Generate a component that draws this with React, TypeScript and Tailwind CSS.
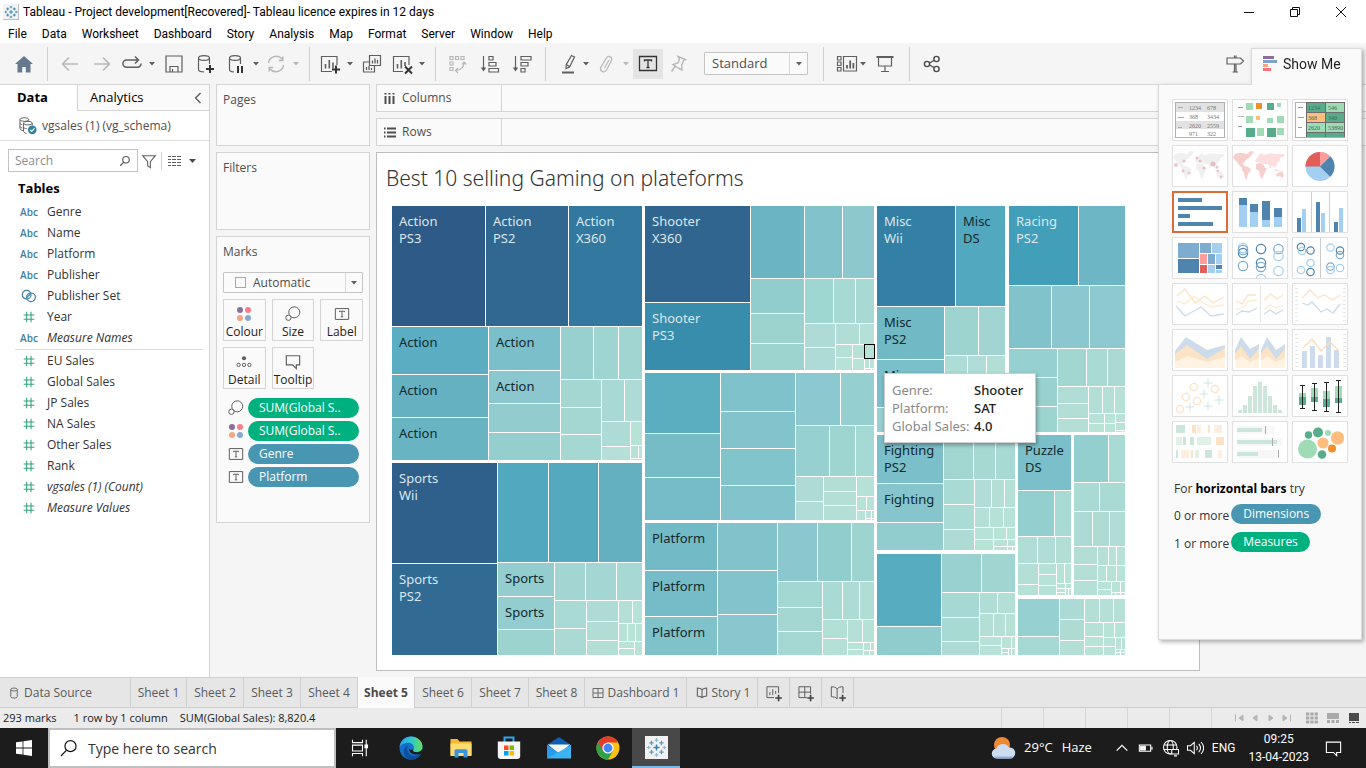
import type { ReactNode } from "react";

type Cell = [number, number, number, number, string];
type Box = [number, number, number, number, string];

/* Treemap cells: left, top, right, bottom, colour. Neighbouring cells share an edge. */
const cells: Cell[] = [
  // Action
  [0, 0, 94, 121, "#2d5a87"], [94, 0, 177, 121, "#316891"], [177, 0, 251, 121, "#33789e"],
  [0, 121, 97, 169, "#5badc1"], [0, 169, 97, 212, "#65b1c2"], [0, 212, 97, 255, "#69b4c3"],
  [97, 121, 169, 165, "#7abfca"], [97, 165, 169, 198, "#8bc7ce"], [97, 198, 169, 227, "#92ccce"], [97, 227, 169, 255, "#94cece"],
  [169, 121, 202, 174, "#98d0d0"], [202, 121, 227, 174, "#9fd5d0"], [227, 121, 251, 174, "#a0d5d1"],
  [169, 174, 210, 202, "#a4d7d2"], [169, 202, 210, 229, "#a5d7d2"], [169, 229, 210, 255, "#a6d8d3"],
  [210, 174, 233, 216, "#a9d9d4"], [233, 174, 251, 216, "#aedbd6"],
  [210, 216, 239, 241, "#aedbd6"], [210, 241, 239, 255, "#b5dfd7"],
  [239, 216, 251, 240, "#b7e2d6"], [239, 240, 247, 253, "#b8e2d7"], [247, 240, 251, 253, "#bae4d8"], [239, 253, 251, 255, "#bae4d8"],
  // Sports
  [0, 257, 106, 358, "#2f5f8b"], [0, 358, 106, 450, "#316b94"],
  [106, 257, 157, 357, "#52a8be"], [157, 257, 207, 357, "#54a9bf"], [207, 257, 251, 357, "#64afc0"],
  [106, 357, 163, 391, "#93cdcf"], [106, 391, 163, 424, "#94cdcf"], [106, 424, 163, 450, "#9cd3cf"],
  [163, 357, 194, 395, "#a3d5d2"], [194, 357, 225, 395, "#a4d6d3"], [225, 357, 251, 395, "#a8d8d3"],
  [163, 395, 195, 423, "#aadad5"], [163, 423, 195, 450, "#abdad5"],
  [195, 395, 227, 416, "#aedbd6"], [195, 416, 227, 435, "#b2ddd6"], [195, 435, 227, 450, "#b4dfd7"],
  [227, 395, 241, 418, "#b5e0d7"], [241, 395, 251, 418, "#b7e2d7"],
  [227, 418, 236, 436, "#b7e2d7"], [236, 418, 244, 436, "#b8e3d7"], [244, 418, 251, 436, "#b8e3d7"],
  [227, 436, 243, 443, "#b8e3d7"], [227, 443, 243, 450, "#b9e3d8"], [243, 436, 251, 450, "#b9e3d8"],
  // Shooter
  [253, 0, 359, 97, "#30658f"], [253, 97, 359, 165, "#388dac"],
  [359, 0, 413, 73, "#6ab4c4"], [413, 0, 451, 73, "#82c3cb"], [451, 0, 483, 73, "#8dc8cf"],
  [359, 73, 413, 108, "#91cdcd"], [359, 108, 413, 138, "#9cd3cf"], [359, 138, 413, 165, "#9ed4d0"],
  [413, 73, 442, 118, "#9ed6d1"], [442, 73, 464, 118, "#a6dad3"], [464, 73, 483, 118, "#a8dad3"],
  [413, 118, 444, 142, "#aedbd6"], [413, 142, 444, 165, "#aedbd6"],
  [444, 118, 468, 139, "#b0ddd6"], [468, 118, 483, 139, "#b5e0d7"],
  [444, 139, 461, 152, "#b5e0d7"], [444, 152, 461, 165, "#b7e2d7"],
  [461, 139, 473, 153, "#b8e2d7"], [461, 153, 473, 165, "#b8e3d7"],
  [473, 139, 483, 153, "#b8e3d7"], [473, 153, 478, 163, "#b9e3d8"], [478, 153, 483, 163, "#b9e3d8"],
  [473, 163, 480, 165, "#bae4d8"], [480, 163, 483, 165, "#bae4d8"],
  // Role-Playing
  [253, 167, 329, 228, "#5badc0"], [253, 228, 329, 272, "#75bcc7"], [253, 272, 329, 315, "#76bcc8"],
  [329, 167, 404, 206, "#80c2cb"], [329, 206, 404, 243, "#82c3cc"], [329, 243, 404, 280, "#82c4cc"], [329, 280, 404, 315, "#83c4cc"],
  [404, 167, 449, 220, "#8cc8cf"], [449, 167, 483, 220, "#96cfd0"],
  [404, 220, 438, 271, "#97d0d0"], [438, 220, 464, 271, "#9ed5d1"], [464, 220, 483, 271, "#a5d9d3"],
  [404, 271, 432, 296, "#aedbd6"], [404, 296, 432, 315, "#b0ddd7"],
  [432, 271, 465, 286, "#b2ded6"], [432, 286, 465, 300, "#b3dfd7"], [432, 300, 465, 315, "#b4dfd7"],
  [465, 271, 483, 291, "#b6e1d7"], [465, 291, 475, 305, "#b7e2d7"], [475, 291, 483, 305, "#b8e3d7"],
  [465, 305, 474, 315, "#b8e3d7"], [474, 305, 480, 313, "#b9e3d8"], [480, 305, 483, 313, "#b9e3d8"],
  [474, 313, 480, 315, "#bae4d8"], [480, 313, 483, 315, "#bae4d8"],
  // Platform
  [253, 317, 326, 365, "#73bac7"], [253, 365, 326, 411, "#75bcc8"], [253, 411, 326, 450, "#80c2ca"],
  [326, 317, 386, 365, "#82c3cb"], [326, 365, 386, 409, "#83c4cc"], [326, 409, 386, 450, "#89c7cf"],
  [386, 317, 426, 376, "#8bc7cf"], [426, 317, 460, 376, "#91cdcd"], [460, 317, 483, 376, "#9dd4d0"],
  [386, 376, 431, 402, "#a3d7d1"], [386, 402, 431, 426, "#a4d7d2"], [386, 426, 431, 450, "#a6d8d3"],
  [431, 376, 451, 414, "#aadad4"], [451, 376, 468, 414, "#addcd5"], [468, 376, 483, 414, "#b0ddd6"],
  [431, 414, 456, 433, "#b2dfd6"], [431, 433, 456, 450, "#b4e0d7"],
  [456, 414, 471, 437, "#b4e0d7"], [471, 414, 483, 437, "#b6e1d7"],
  [456, 437, 472, 444, "#b8e3d7"], [456, 444, 472, 450, "#b8e3d7"],
  [472, 437, 479, 445, "#b9e3d8"], [479, 437, 483, 445, "#b9e3d8"],
  [472, 445, 478, 450, "#b9e3d8"], [478, 445, 483, 450, "#bae4d8"],
  // Misc
  [485, 0, 564, 101, "#3480a5"], [564, 0, 614, 101, "#52a8bf"],
  [485, 101, 553, 154, "#70b9c5"], [485, 154, 553, 202, "#7abfc9"], [485, 202, 553, 227, "#96cfd0"],
  [553, 101, 587, 150, "#9dd4d0"], [587, 101, 614, 150, "#a2d5d2"],
  [553, 150, 576, 227, "#aedcd6"], [576, 150, 595, 227, "#b0ddd7"], [595, 150, 614, 227, "#b2ded6"],
  // Racing
  [617, 0, 687, 80, "#429fba"], [687, 0, 734, 80, "#6db6c5"],
  [617, 80, 660, 143, "#82c3cb"], [660, 80, 698, 143, "#8bc7cf"], [698, 80, 734, 143, "#8dc9ce"],
  [617, 143, 666, 172, "#97d0d0"], [617, 172, 666, 201, "#99d1d0"], [617, 201, 666, 227, "#9cd4d0"],
  [666, 143, 695, 181, "#a2d6d1"], [695, 143, 716, 181, "#a9dad4"], [716, 143, 734, 181, "#abdad5"],
  [666, 181, 697, 198, "#b0ddd6"], [666, 198, 697, 213, "#b2ded6"], [666, 213, 697, 227, "#b4dfd7"],
  [697, 181, 711, 208, "#b3dfd7"], [711, 181, 723, 208, "#b5e0d7"], [723, 181, 734, 208, "#b6e1d7"],
  [697, 208, 713, 218, "#b7e2d7"], [697, 218, 713, 227, "#b8e3d7"],
  [713, 208, 724, 218, "#b8e3d7"], [713, 218, 724, 227, "#b9e3d8"],
  [724, 208, 734, 217, "#b9e3d8"], [724, 217, 734, 225, "#b9e3d8"], [724, 225, 731, 227, "#bae4d8"], [731, 225, 734, 227, "#bae4d8"],
  // Fighting
  [485, 229, 552, 278, "#7abfc9"], [485, 278, 552, 317, "#85c5cb"], [485, 317, 552, 345, "#91cdce"],
  [552, 229, 582, 274, "#a2d6d1"], [582, 229, 604, 274, "#a7d9d3"], [604, 229, 624, 274, "#a8dad4"],
  [552, 274, 583, 299, "#aadad4"], [552, 299, 583, 324, "#abdbd5"], [552, 324, 583, 345, "#aedcd5"],
  [583, 274, 600, 302, "#b1ddd6"], [600, 274, 613, 302, "#b3dfd7"], [613, 274, 624, 302, "#b5e0d7"],
  [583, 302, 598, 322, "#b5e0d7"], [598, 302, 612, 322, "#b6e1d7"], [612, 302, 624, 322, "#b7e2d7"],
  [583, 322, 602, 334, "#b7e2d7"], [583, 334, 602, 345, "#b8e3d7"],
  [602, 322, 615, 334, "#b8e3d7"], [615, 322, 624, 334, "#b8e3d7"],
  [602, 334, 616, 341, "#b9e3d8"], [602, 341, 616, 345, "#b9e3d8"], [616, 334, 624, 341, "#b9e3d8"],
  [616, 341, 621, 345, "#bae4d8"], [621, 341, 624, 345, "#bae4d8"],
  // Simulation
  [485, 348, 550, 421, "#58acbf"], [485, 421, 550, 450, "#8fcccd"],
  [550, 348, 590, 387, "#99d1d1"], [590, 348, 624, 387, "#a0d5d2"],
  [550, 387, 588, 412, "#a6d9d3"], [550, 412, 588, 436, "#a8dad4"], [550, 436, 588, 450, "#aedcd5"],
  [588, 387, 606, 408, "#b0ddd6"], [606, 387, 624, 408, "#b3dfd7"],
  [588, 408, 602, 431, "#b3dfd7"], [602, 408, 614, 431, "#b5e0d7"], [614, 408, 624, 431, "#b6e1d7"],
  [588, 431, 610, 440, "#b7e2d7"], [588, 440, 610, 450, "#b7e2d7"],
  [610, 431, 620, 443, "#b8e3d7"], [620, 431, 624, 443, "#b9e3d8"],
  [610, 443, 617, 447, "#b9e3d8"], [610, 447, 617, 450, "#b9e3d8"], [617, 443, 620, 450, "#bae4d8"], [620, 443, 624, 450, "#bae4d8"],
  // Puzzle
  [626, 229, 680, 285, "#7abfc9"], [626, 285, 663, 331, "#94cfd0"], [663, 285, 680, 331, "#a9dad4"],
  [626, 331, 646, 358, "#b0ddd6"], [646, 331, 664, 358, "#b0ddd6"], [664, 331, 680, 358, "#b2ded6"],
  [626, 358, 647, 379, "#b3dfd7"], [626, 379, 647, 390, "#b6e1d7"],
  [647, 358, 665, 369, "#b6e1d7"], [647, 369, 665, 380, "#b7e2d7"], [647, 380, 665, 390, "#b7e2d7"],
  [665, 358, 673, 378, "#b7e2d7"], [673, 358, 680, 378, "#b8e3d7"],
  [665, 378, 674, 383, "#b9e3d8"], [665, 383, 674, 387, "#b9e3d8"], [665, 387, 674, 390, "#bae4d8"],
  [674, 378, 680, 383, "#b9e3d8"], [674, 383, 677, 390, "#bae4d8"], [677, 383, 680, 390, "#bae4d8"],
  // Adventure
  [682, 229, 717, 277, "#94cfd0"], [717, 229, 734, 277, "#a9dad4"],
  [682, 277, 708, 306, "#a9dad4"], [708, 277, 734, 306, "#aadad4"],
  [682, 306, 701, 341, "#acdbd5"], [701, 306, 718, 341, "#aedcd5"], [718, 306, 734, 341, "#b0ddd6"],
  [682, 341, 706, 359, "#b2ded6"], [682, 359, 706, 375, "#b4dfd7"], [682, 375, 706, 390, "#b5e0d7"],
  [706, 341, 717, 360, "#b5e0d7"], [717, 341, 725, 360, "#b7e2d7"], [725, 341, 734, 360, "#b7e2d7"],
  [706, 360, 715, 376, "#b7e2d7"], [715, 360, 725, 376, "#b7e2d7"], [725, 360, 734, 376, "#b8e3d7"],
  [706, 376, 720, 384, "#b8e3d7"], [706, 384, 720, 390, "#b9e3d8"],
  [720, 376, 729, 387, "#b9e3d8"], [729, 376, 734, 387, "#b9e3d8"],
  [720, 387, 724, 390, "#bae4d8"], [724, 387, 729, 390, "#bae4d8"], [729, 387, 734, 390, "#bae4d8"],
  // Strategy
  [626, 393, 668, 431, "#97d0d0"], [626, 431, 668, 450, "#a6d9d3"],
  [668, 393, 693, 414, "#acdbd5"], [668, 414, 693, 435, "#aedcd5"], [668, 435, 693, 450, "#b3dfd7"],
  [693, 393, 708, 417, "#b4dfd7"], [708, 393, 722, 417, "#b5e0d7"], [722, 393, 734, 417, "#b6e1d7"],
  [693, 417, 712, 431, "#b6e1d7"], [693, 431, 712, 441, "#b8e3d7"], [693, 441, 712, 450, "#b8e3d7"],
  [712, 417, 723, 432, "#b8e3d7"], [723, 417, 734, 432, "#b8e3d7"],
  [712, 432, 724, 441, "#b9e3d8"], [712, 441, 724, 450, "#b9e3d8"],
  [724, 432, 730, 444, "#b9e3d8"], [730, 432, 734, 444, "#b9e3d8"],
  [724, 444, 729, 447, "#bae4d8"], [729, 444, 734, 447, "#bae4d8"], [724, 447, 729, 450, "#bae4d8"], [729, 447, 734, 450, "#bae4d8"],
];

const light = "#dbe7ee";
const dark = "#12292e";
const cellLabels: [number, number, string, string, string?][] = [
  [0, 0, light, "Action", "PS3"], [94, 0, light, "Action", "PS2"], [177, 0, light, "Action", "X360"],
  [0, 121, dark, "Action"], [0, 169, dark, "Action"], [0, 212, dark, "Action"],
  [97, 121, dark, "Action"], [97, 165, dark, "Action"],
  [0, 257, light, "Sports", "Wii"], [0, 358, light, "Sports", "PS2"],
  [106, 357, dark, "Sports"], [106, 391, dark, "Sports"],
  [253, 0, light, "Shooter", "X360"], [253, 97, light, "Shooter", "PS3"],
  [253, 317, dark, "Platform"], [253, 365, dark, "Platform"], [253, 411, dark, "Platform"],
  [485, 0, light, "Misc", "Wii"], [564, 0, dark, "Misc", "DS"],
  [485, 101, dark, "Misc", "PS2"], [485, 154, dark, "Misc"],
  [617, 0, light, "Racing", "PS2"],
  [485, 229, dark, "Fighting", "PS2"], [485, 278, dark, "Fighting"],
  [626, 229, dark, "Puzzle", "DS"],
];

function Treemap() {
  return (
    <svg viewBox="0 0 734 450" className="block h-auto w-full" role="img" aria-label="Global sales by genre and platform">
      <g shapeRendering="crispEdges">
        {cells.map(([x, y, r, b, fill], i) => (
          <rect key={i} x={x} y={y} width={r - x - 1} height={b - y - 1} fill={fill} />
        ))}
        <rect x="472.5" y="138.5" width="10" height="14" fill="none" stroke="#000" />
      </g>
      <g className="font-['Noto_Sans']" fontSize="13">
        {cellLabels.map(([x, y, fill, a, b], i) => (
          <text key={i} fill={fill}>
            <tspan x={x + 7} y={y + 20}>{a}</tspan>
            {b && <tspan x={x + 7} y={y + 37}>{b}</tspan>}
          </text>
        ))}
      </g>
    </svg>
  );
}

/* ---------- small drawing helpers ---------- */

function Ico({ children, c = "#5f5f5f", s = "h-6 w-6", w = 1.2 }: { children: ReactNode; c?: string; s?: string; w?: number }) {
  return (
    <svg viewBox="0 0 24 24" className={`${s} shrink-0`} fill="none" stroke={c} strokeWidth={w} aria-hidden="true">
      {children}
    </svg>
  );
}

function Boxes({ list }: { list: Box[] }) {
  return <>{list.map(([x, y, w, h, f], i) => <rect key={i} x={x} y={y} width={w} height={h} fill={f} />)}</>;
}

function Caret({ c = "#5f5f5f" }: { c?: string }) {
  return (
    <svg viewBox="0 0 8 6" className="h-[6px] w-2 shrink-0" aria-hidden="true"><path d="M1 1h6L4 4.5z" fill={c} /></svg>
  );
}

function TextGlyph() {
  return (
    <>
      <path d="M4 5.5h16v13H4z" />
      <path d="M9 9.8V8.7h6v1.1M12 8.7v6.6M10.6 15.4h2.8" />
    </>
  );
}

function ColourDots() {
  return (
    <svg viewBox="0 0 16 16" className="h-4 w-4 shrink-0" aria-hidden="true">
      <circle cx="4" cy="4" r="3" fill="#8a7099" /><circle cx="12" cy="4" r="3" fill="#fc7d8a" />
      <circle cx="4" cy="12" r="3" fill="#f6a67f" /><circle cx="12" cy="12" r="3" fill="#86a9cf" />
    </svg>
  );
}

function SizeGlyph() {
  return <Ico s="h-5 w-5"><circle cx="13.5" cy="10" r="6.6" /><circle cx="6.5" cy="16.5" r="3.2" fill="#fafafa" /></Ico>;
}

function Tool({ label, w = "w-8", children }: { label: string; w?: string; children: ReactNode }) {
  return (
    <button type="button" aria-label={label} className={`flex h-8 ${w} shrink-0 items-center justify-center`}>{children}</button>
  );
}

function Sep({ m }: { m: string }) {
  return <span className={`h-[34px] w-px shrink-0 bg-[#d0d0d0] ${m}`} />;
}

function TableauMark({ c }: { c: string[] }) {
  const plus = (x: number, y: number, r: number) => `M${x - r} ${y}h${2 * r}M${x} ${y - r}v${2 * r}`;
  return (
    <>
      <path d={plus(12, 12, 3.4)} stroke={c[0]} strokeWidth="1.6" />
      <path d={plus(6.3, 6.8, 2.5) + plus(17.7, 6.8, 2.5) + plus(6.3, 17.2, 2.5) + plus(17.7, 17.2, 2.5)} stroke={c[1]} strokeWidth="1.5" />
      <path d={plus(12, 3.6, 2.1) + plus(12, 20.4, 2.1) + plus(3, 12, 2.1) + plus(21, 12, 2.1)} stroke={c[2]} strokeWidth="1.3" />
    </>
  );
}

/* ---------- title bar, menus, toolbar ---------- */

const menus = ["File", "Data", "Worksheet", "Dashboard", "Story", "Analysis", "Map", "Format", "Server", "Window", "Help"];

function TitleBar() {
  return (
    <header className="bg-white font-['Roboto'] text-[12px] text-black">
      <div className="flex h-6 items-center">
        <span className="ml-[3px] flex h-4 w-4 items-center justify-center border-r border-b border-[#bbb] bg-[#f3f3f3]">
          <Ico s="h-[14px] w-[14px]"><TableauMark c={["#2a7fae", "#2a7fae", "#2a7fae"]} /></Ico>
        </span>
        <h1 className="ml-1 whitespace-nowrap">Tableau - Project development[Recovered]- Tableau licence expires in 12 days</h1>
        <div className="mr-0.5 ml-auto flex">
          {["Minimise", "Restore", "Close"].map((n) => (
            <button key={n} type="button" aria-label={n} className="flex h-5 w-[46px] items-center justify-center">
              <svg viewBox="0 0 12 12" className="h-3 w-3" fill="none" stroke="#111">
                {n === "Minimise" && <path d="M1 6.5h10" />}
                {n === "Restore" && <path d="M1.5 3.5h7v7h-7zM3.5 3.5v-2h7v7h-2" />}
                {n === "Close" && <path d="M1 1l10 10M11 1L1 11" />}
              </svg>
            </button>
          ))}
        </div>
      </div>
      <nav className="flex h-[19px] items-center gap-[15px] pl-2">
        {menus.map((m) => <button key={m} type="button">{m}</button>)}
      </nav>
    </header>
  );
}

const faint = "#b8b8b8";

function Toolbar() {
  return (
    <div className="flex h-[41px] items-center bg-[#f5f5f5]">
      <Tool label="Start page" w="w-[47px]">
        <svg viewBox="0 0 24 24" className="h-6 w-6"><path d="M12 4l9 8h-2.500v8.500h-4.700v-5.500h-3.600v5.500H5.500V12H3z" fill="#66788c" /></svg>
      </Tool>
      <Sep m="mr-1.5" />
      <Tool label="Undo"><Ico c={faint} w={1.6}><path d="M20 12H4.500M11 5.500L4.500 12l6.500 6.500" /></Ico></Tool>
      <Tool label="Redo"><Ico c={faint} w={1.6}><path d="M4 12h15.500M13 5.500l6.500 6.500-6.500 6.500" /></Ico></Tool>
      <Tool label="Replay" w="w-7"><Ico w={1.5}><path d="M18.500 8H6.500a3.600 3.600 0 000 7.200h11a3.600 3.600 0 003.600-3.600M15 4.500l3.500 3.500L15 11.500" /></Ico></Tool>
      <Tool label="Replay options" w="w-3"><Caret /></Tool>
      <Tool label="Save"><Ico><path d="M4 4h16v16H4zM8 20v-5.500h8V20M10.500 20v-3" /></Ico></Tool>
      <Tool label="New data source">
        <Ico><ellipse cx="10" cy="6" rx="5.500" ry="2.400" /><path d="M4.500 6v11.500c0 1.500 2 2.400 5.500 2.400M15.500 6v6" /><path d="M16 13v8M12 17h8" stroke="#333" strokeWidth="2" /></Ico>
      </Tool>
      <Tool label="Pause auto updates" w="w-7">
        <Ico><ellipse cx="11" cy="6" rx="5.500" ry="2.400" /><path d="M5.500 6v11.500c0 1.500 2 2.400 4.500 2.400M16.500 6v6" /><path d="M14 14v7M18 14v7" stroke="#333" strokeWidth="2" /></Ico>
      </Tool>
      <Tool label="Update options" w="w-3"><Caret /></Tool>
      <Tool label="Run update" w="w-7"><Ico c={faint} w={1.5}><path d="M4.500 11a7.600 7.600 0 0114-3M19.500 13a7.600 7.600 0 01-14 3M18.800 4.500v4h-4M5.200 19.500v-4h4" /></Ico></Tool>
      <Tool label="Run options" w="w-3"><Caret c={faint} /></Tool>
      <Sep m="mr-1.5 ml-[7px]" />
      <Tool label="New worksheet" w="w-7">
        <Ico><path d="M14 19.500H3.500v-15h15.500V13" /><path d="M7.500 16.500V12M11.300 16.500V8M15 16.500v-6" strokeWidth="1.600" /><path d="M18 13.500v8M14 17.500h8" stroke="#333" strokeWidth="2" /></Ico>
      </Tool>
      <Tool label="Worksheet options" w="w-3"><Caret /></Tool>
      <Tool label="Duplicate sheet">
        <Ico><path d="M9.500 3.500h11v10h-11zM9.500 10H3.500v10h11v-6.500" /><path d="M12.500 11.500V8.500M15 11.500v-5M17.500 11.500V8M6.500 18v-3M9 18v-4M11.500 18v-2" strokeWidth="1.300" /></Ico>
      </Tool>
      <Tool label="Clear sheet" w="w-7">
        <Ico><path d="M13 19.500H3.500v-15h15.500V13" /><path d="M7.500 16.500V12M11.300 16.500V8M15 14v-4" strokeWidth="1.600" /><path d="M15 14.500l7 7M22 14.500l-7 7" stroke="#333" strokeWidth="2" /></Ico>
      </Tool>
      <Tool label="Clear options" w="w-3"><Caret /></Tool>
      <Sep m="mr-1.5 ml-[7px]" />
      <Tool label="Swap rows and columns">
        <Ico c={faint}><path d="M4 4.500h3v3H4zM9.500 4.500h3v3h-3zM15 4.500h3v3h-3zM4 10h3v3H4zM4 15.500h3v3H4z" /><path d="M10 18.500c5 0 8-3.500 8-8M16 12.500l2-2.500 2.300 2.500M12 16l-2.500 2.500L12 21" /></Ico>
      </Tool>
      <Tool label="Sort ascending"><Ico><path d="M5.500 4v14M11 4.500h4v3.500h-4zM11 10.500h7V14h-7zM11 16.500h9.500V20H11z" /><path d="M2.800 15.500L5.500 19.500l2.700-4z" fill="#5f5f5f" stroke="none" /></Ico></Tool>
      <Tool label="Sort descending"><Ico><path d="M5.500 4v14M11 4.500h10V8H11zM11 10.500h7V14h-7zM11 16.500h4V20h-4z" /><path d="M2.800 15.500L5.500 19.500l2.700-4z" fill="#5f5f5f" stroke="none" /></Ico></Tool>
      <Sep m="mr-2 ml-[7px]" />
      <Tool label="Highlight" w="w-7"><Ico><path d="M15.500 3.500l3 1.500-5 10-3.500 1.500.300-4zM10.200 12.500l3.300 2" /><path d="M6 20.500h12" strokeWidth="2" /></Ico></Tool>
      <Tool label="Highlight options" w="w-2"><Caret /></Tool>
      <Tool label="Group members" w="w-8"><Ico c={faint}><path d="M8 13.500l4.500-7.500a2.800 2.800 0 015 2.500L12.500 18a3.200 3.200 0 01-6-2L12 6.500M10.500 16l4.500-8" /></Ico></Tool>
      <Tool label="Group options" w="w-2"><Caret c={faint} /></Tool>
      <button type="button" aria-label="Show mark labels" aria-pressed="true" className="ml-[3px] flex h-[30px] w-[30px] shrink-0 items-center justify-center bg-[#e4e4e4]">
        <Ico c="#333" w={1.3}><path d="M3.500 4.500h17v14h-17z" /><path d="M8.500 9.500V8h7v1.500M12 8v8M10.500 15.500h3" /></Ico>
      </button>
      <Tool label="Fix axes" w="w-[30px]"><Ico c={faint} w={1.4}><path d="M12 4.500l7.500 3-1.800 1-2 4.500.300 5-4-2-5-3.500 5-1.500 1.500-4zM9 14.500L5.500 19.500" /></Ico></Tool>
      <div className="relative ml-[11px] flex shrink-0 items-center text-[13px] text-[#4e4e4e]">
        <select aria-label="Fit" className="h-[23px] w-[104px] appearance-none rounded-[1px] border border-[#c6c6c6] bg-[#fafafa] pl-[7px]"><option>Standard</option></select>
        <span className="pointer-events-none absolute inset-y-px right-px flex w-[18px] items-center justify-center border-l border-[#d9d9d9]"><Caret /></span>
      </div>
      <Sep m="mr-[11px] ml-[15px]" />
      <Tool label="Show or hide cards" w="w-6">
        <Ico><path d="M2.500 4.500H6V8H2.500zM2.500 10H6v3.500H2.500zM2.500 15.500H6V19H2.500zM8.500 4.500h13V19h-13z" /><path d="M12 16.500V13M15.200 16.500V8.500M18.400 16.500V11" strokeWidth="1.800" /></Ico>
      </Tool>
      <Tool label="Card options" w="w-2"><Caret /></Tool>
      <Tool label="Presentation mode" w="w-9"><Ico><path d="M3.500 5h17" strokeWidth="2" /><path d="M5.500 6v8h13V6M12 14v5.500M8 19.500h8" /></Ico></Tool>
      <Sep m="mr-1.5 ml-1.5" />
      <Tool label="Share"><Ico w={1.4} c="#4a4a4a"><circle cx="7" cy="12" r="2.600" /><circle cx="16.500" cy="7" r="2.600" /><circle cx="16.500" cy="17" r="2.600" /><path d="M9.500 11l4.500-2.500M9.500 13l4.500 2.500" /></Ico></Tool>
      <span className="mr-[115px] ml-auto">
        <Tool label="Guide"><Ico><path d="M4 6h13.500l3 3-3 3H4zM11.500 3.500V6M13 3.500V6M11.500 12v8M13 12v8M9.500 20h5.500" /></Ico></Tool>
      </span>
    </div>
  );
}

/* ---------- data pane ---------- */

type Field = [icon: "abc" | "set" | "num", name: string, italic?: boolean];
const dims: Field[] = [["abc", "Genre"], ["abc", "Name"], ["abc", "Platform"], ["abc", "Publisher"], ["set", "Publisher Set"], ["num", "Year"], ["abc", "Measure Names", true]];
const meas: Field[] = [["num", "EU Sales"], ["num", "Global Sales"], ["num", "JP Sales"], ["num", "NA Sales"], ["num", "Other Sales"], ["num", "Rank"], ["num", "vgsales (1) (Count)", true], ["num", "Measure Values", true]];

function FieldRow({ f: [icon, name, italic] }: { f: Field }) {
  return (
    <li className="flex h-[21px] items-center gap-2 pl-[19px]">
      <span className="flex w-5 shrink-0 justify-center text-[10px] leading-4 font-semibold text-[#3f7f9e]">
        {icon === "abc" && "Abc"}
        {icon === "set" && <Ico s="h-4 w-4" c="#3f7f9e" w={1.8}><circle cx="8.500" cy="10" r="6.500" /><circle cx="15" cy="14" r="6.500" /><path d="M9 14l5-5" /></Ico>}
        {icon === "num" && <Ico s="h-4 w-4" c="#34a17c" w={1.6}><path d="M8.500 4v16M15 4v16M4 9h16M4 15.500h16" /></Ico>}
      </span>
      <span className={italic ? "italic" : ""}>{name}</span>
    </li>
  );
}

function DataPane() {
  return (
    <aside className="w-[210px] shrink-0 border-t border-r border-[#d4d4d4] bg-white text-[12px] text-[#333]">
      <div className="flex h-[26px] text-[13px] text-black">
        <button type="button" className="w-[77px] pr-3 text-center font-bold">Data</button>
        <button type="button" className="flex-1 border-b border-l border-[#d4d4d4] bg-[#fafafa] pl-3 text-left">Analytics</button>
        <button type="button" aria-label="Collapse pane" className="flex w-[22px] items-center justify-center border-b border-[#d4d4d4] bg-[#fafafa]">
          <Ico s="h-3 w-3" c="#555" w={2.5}><path d="M17 2L7 12l10 10" /></Ico>
        </button>
      </div>
      <div className="flex h-[30px] items-center border-b border-[#dedede] pl-[18px] text-[#4e4e4e]">
        <Ico s="h-[19px] w-[19px]">
          <ellipse cx="8" cy="4.500" rx="5.500" ry="2.300" /><path d="M2.500 4.500v11c0 1.500 1.500 2.500 4 3M13.500 4.500V6" />
          <ellipse cx="12.500" cy="9" rx="5.500" ry="2.300" /><path d="M7 9v10c0 1.500 1.500 2.500 4 3M18 9v3M2.500 9c0 1 1 1.800 3 2M2.500 13c0 1 1 1.800 3 2M7 14c0 1 2 2 4 2" />
          <circle cx="18" cy="17.500" r="5.500" fill="#2f82a3" stroke="none" /><path d="M15.300 17.500l2 2 3.500-4" stroke="#fff" strokeWidth="1.500" />
        </Ico>
        <span className="ml-[5px]">vgsales (1) (vg_schema)</span>
      </div>
      <div className="flex items-center pt-2 pl-2">
        <div className="flex h-[23px] w-[130px] items-center border border-[#c4c4c4] px-1.5">
          <input aria-label="Search fields" placeholder="Search" className="w-full min-w-0 bg-transparent outline-none placeholder:text-[#8c8c8c]" />
          <Ico s="h-3 w-3" c="#555" w={2.2}><circle cx="14" cy="9.500" r="6.500" /><path d="M9.500 14.500L2.500 21.500" /></Ico>
        </div>
        <button type="button" aria-label="Filter fields" className="ml-[3px]"><Ico s="h-4 w-4" w={1.6}><path d="M2.500 4h19l-7.500 9v9l-4-3v-6z" /></Ico></button>
        <span className="ml-1 h-[18px] w-px bg-[#d4d4d4]" />
        <button type="button" aria-label="View options" className="ml-[6px] flex items-center gap-[7px]">
          <svg viewBox="0 0 13 10" className="h-[10px] w-[13px]" stroke="#5f5f5f"><path d="M0 .5h3M4 .5h4M9 .5h4M0 3.500h3M4 3.500h4M9 3.500h4M0 6.500h3M4 6.500h4M9 6.500h4M0 9.500h3M4 9.500h4M9 9.500h4" /></svg>
          <svg viewBox="0 0 8 6" className="h-[6px] w-[9px]"><path d="M.5 1h7L4 5z" fill="#4a4a4a" /></svg>
        </button>
      </div>
      <h2 className="flex h-[29px] items-center pt-1 pl-[18px] text-[13px] font-bold text-black">Tables</h2>
      <ul>{dims.map((f) => <FieldRow key={f[1]} f={f} />)}</ul>
      <ul className="pt-px"><li aria-hidden="true" className="mr-[6px] ml-[15px] h-px bg-[#dedede]" />{meas.map((f) => <FieldRow key={f[1]} f={f} />)}</ul>
    </aside>
  );
}

/* ---------- cards ---------- */

function Card({ title, h, children }: { title: string; h: string; children?: ReactNode }) {
  return (
    <section className={`border border-[#d4d4d4] bg-[#fafafa] px-1.5 ${h}`}>
      <h3 className="flex h-[30px] items-center">{title}</h3>
      {children}
    </section>
  );
}

function MarkButton({ label, children }: { label: string; children: ReactNode }) {
  return (
    <button type="button" className="flex h-[42px] flex-col items-center border border-[#d4d4d4] bg-[#fafafa] text-[#222]">
      <span className="flex h-[26px] items-center pt-0.5">{children}</span>
      <span className="leading-3">{label}</span>
    </button>
  );
}

const pills: ["size" | "colour" | "text", string, boolean][] = [["size", "SUM(Global S..", true], ["colour", "SUM(Global S..", true], ["text", "Genre", false], ["text", "Platform", false]];

function Cards() {
  return (
    <div className="ml-1.5 flex w-[154px] shrink-0 flex-col gap-1.5 text-[12px] text-[#4e4e4e]">
      <Card title="Pages" h="h-[62px]" />
      <Card title="Filters" h="h-[78px]" />
      <Card title="Marks" h="h-[287px]">
        <div className="relative mt-[5px] flex items-center">
          <select aria-label="Mark type" className="h-[21px] w-full appearance-none rounded-[1px] border border-[#c6c6c6] bg-[#fafafa] pl-[29px]"><option>Automatic</option></select>
          <span className="pointer-events-none absolute left-3 h-[11px] w-[11px] border border-[#a8a8a8]" />
          <span className="pointer-events-none absolute inset-y-px right-px flex w-[17px] items-center justify-center border-l border-[#d9d9d9]"><Caret /></span>
        </div>
        <div className="mt-1.5 grid grid-cols-3 gap-1.5">
          <MarkButton label="Colour"><ColourDots /></MarkButton>
          <MarkButton label="Size"><SizeGlyph /></MarkButton>
          <MarkButton label="Label"><Ico s="h-5 w-5"><TextGlyph /></Ico></MarkButton>
          <MarkButton label="Detail"><Ico s="h-5 w-5"><circle cx="12" cy="7.500" r="2.500" fill="#5f5f5f" stroke="none" /><circle cx="5.500" cy="15.500" r="2" /><circle cx="12" cy="15.500" r="2" /><circle cx="18.500" cy="15.500" r="2" /></Ico></MarkButton>
          <MarkButton label="Tooltip"><Ico s="h-5 w-5" w={1.4}><path d="M4 4.500h16v11h-4v4.500l-4.500-4.500H4z" /></Ico></MarkButton>
        </div>
        <ul className="mt-[9px] flex flex-col gap-[3px]">
          {pills.map(([kind, name, green], i) => (
            <li key={i} className="flex h-5 items-center">
              <span className="flex w-[25px] justify-center">
                {kind === "size" && <SizeGlyph />}
                {kind === "colour" && <ColourDots />}
                {kind === "text" && <Ico s="h-5 w-5"><TextGlyph /></Ico>}
              </span>
              <span className={`flex h-5 w-[111px] items-center rounded-full pl-[11px] whitespace-nowrap text-white ${green ? "bg-[#00b180]" : "bg-[#4996b2]"}`}>{name}</span>
            </li>
          ))}
        </ul>
      </Card>
    </div>
  );
}

/* ---------- view ---------- */

function Shelf({ label, children }: { label: string; children: ReactNode }) {
  return (
    <div className="flex h-7 border border-r-0 border-[#d4d4d4] bg-[#fafafa]">
      <div className="flex w-[125px] items-center gap-1.5 border-r border-[#d4d4d4] pl-1.5">
        <svg viewBox="0 0 13 13" className="h-[13px] w-[13px]" stroke="#4e4e4e" strokeWidth="2">{children}</svg>
        {label}
      </div>
    </div>
  );
}

function TooltipBox() {
  const rows = [["Genre:", "Shooter"], ["Platform:", "SAT"], ["Global Sales:", "4.0"]];
  return (
    <dl role="tooltip" className="absolute top-[167px] left-[492px] z-10 grid grid-cols-[82px_auto] border border-[#cfcfcf] bg-white py-[7px] pr-3 pl-[7px] font-['Noto_Sans'] text-[13px] leading-[18px] shadow-[1px_2px_4px_rgba(0,0,0,0.35)]">
      {rows.map(([k, v]) => [
        <dt key={k} className="whitespace-nowrap text-[#8a8a8a]">{k}</dt>,
        <dd key={v} className="font-medium text-[#222]">{v}</dd>,
      ])}
    </dl>
  );
}

function View() {
  return (
    <main className="ml-1.5 flex min-w-0 flex-1 flex-col gap-1.5 pb-1.5 text-[12px] text-[#4e4e4e]">
      <Shelf label="Columns"><path d="M2.500 4v8M6.500 4v8M10.500 4v8M2.500 1v1.500M6.500 1v1.500M10.500 1v1.500" /></Shelf>
      <Shelf label="Rows"><path d="M4 2.500h9M4 6.500h9M4 10.500h9M1 2.500h1.500M1 6.500h1.500M1 10.500h1.500" /></Shelf>
      <section className="mr-[166px] flex-1 border border-[#bdbdbd] bg-white pt-2.5 pr-[73px] pl-[15px]">
        <h2 className="-ml-[6px] font-['Noto_Sans'] text-[21px] leading-[30px] font-light text-[#333]">Best 10 selling Gaming on plateforms</h2>
        <div className="relative mt-[13px]">
          <Treemap />
          <TooltipBox />
        </div>
      </section>
    </main>
  );
}

/* ---------- Show Me ---------- */

const B = "#4e84ae", L = "#a3cff0", G = "#57ad8b", LG = "#9fdcb6", O = "#f28e2b", LO = "#ffbe7d";
const fB = "#cddcea", fO = "#fde3c6", fY = "#fff3e4", fG = "#cce6dc";

const americas = "M2 8l3-1 5 0 3 1 4-1 2 1-1 2-2 1 1 1-3 1-2 2-1 2-1 0 0 2 2 1 3 1 3 2-1 3-2 2-1 4-1 2-1-2-1-5-2-3 0-2-3-3-2-3-3-3-1-2z";
const eurasia = "M24 12l1-1 1-2 3-2 2 2 4-1 3-1 4 1 8 0 2 1-2 2-3 1 0 3-2 1-1 3-2 1 0 3-2-3-1-1-2 4-1-4-2-1-3 0-1-1-3 0-1-1-3 0-1-1z";
const africa = "M23 18l3-1 4 1 2 4 2 0-2 4-2 5-2 2-1-4-1-4-3-2z";
const oceania = "M43 28l4-2 2-1 2 5-2 2-2-2-3 1zM41 23l3 1 3 1-4 0z";
const greenland = "M15 6l4-1 2 1-3 3z";
const world = [americas, eurasia, africa, oceania, greenland];

function Rings({ pts, r, w = 1 }: { pts: [number, number, string][]; r: number; w?: number }) {
  return <g fill="none" strokeWidth={w}>{pts.map(([x, y, s], i) => <circle key={i} cx={x} cy={y} r={r} stroke={s} />)}</g>;
}

const thumbs: [string, ReactNode][] = [
  ["Text table", <>
    <rect x="2.500" y="2.500" width="49" height="35" fill="#fff" stroke="#b0b0b0" />
    <Boxes list={[[3, 3, 48, 9, "#e2e2e2"], [3, 21, 48, 8, "#e2e2e2"], [5, 7, 5, 1, "#a8a8a8"], [5, 17, 6, 1, "#a8a8a8"], [5, 27, 4, 1, "#a8a8a8"]]} />
    <g fontSize="6" fill="#777" fontFamily="Liberation Serif, serif">
      <text x="16" y="9.500">1234</text><text x="34" y="9.500">678</text><text x="16" y="19">368</text><text x="34" y="19">3434</text>
      <text x="16" y="28">2620</text><text x="34" y="28">2559</text><text x="16" y="36">971</text><text x="34" y="36">322</text>
    </g></>],
  ["Heat map", <Boxes list={[[5, 7, 5, 1, "#999"], [5, 16, 6, 1, "#bbb"], [5, 26, 4, 1, "#999"], [13, 3, 7, 7, LG], [23, 3, 6, 6, O], [34, 3, 7, 7, G], [44, 3, 4, 4, LG], [13, 16, 7, 7, LG], [23, 16, 4, 4, LO], [34, 18, 6, 5, LG], [44, 16, 7, 7, LG], [13, 28, 9, 9, G], [24, 28, 7, 8, LG], [34, 28, 9, 9, G], [44, 28, 7, 7, LG]]} />],
  ["Highlight table", <>
    <rect x="2.500" y="2.500" width="49" height="35" fill="#fff" stroke="#b0b0b0" />
    <Boxes list={[[5, 7, 5, 1, "#999"], [5, 17, 6, 1, "#999"], [5, 27, 4, 1, "#999"], [13, 2, 39, 35, "#6c6c6c"], [14, 3, 18, 9, G], [33, 3, 18, 9, LG], [14, 13, 18, 9, LO], [33, 13, 18, 9, G], [14, 23, 18, 9, LG], [33, 23, 18, 9, LG], [14, 33, 18, 4, G], [33, 33, 18, 4, G]]} />
    <g fontSize="6" fill="#3c6a58" fontFamily="Liberation Serif, serif">
      <text x="15" y="10">1234</text><text x="35" y="10">546</text><text x="15" y="20">368</text><text x="35" y="20">340</text><text x="15" y="30">2620</text><text x="35" y="30">53890</text>
    </g></>],
  ["Symbol map", <>
    {world.map((d) => <path key={d} d={d} fill="#f0f0f0" />)}
    <g fill="#e0a0a8" opacity=".6"><circle cx="3" cy="19" r="2" /><circle cx="11" cy="15" r="1.500" /><circle cx="10" cy="25" r="1.500" /><circle cx="16" cy="27" r="1.500" /><circle cx="24" cy="12" r="1.500" /><circle cx="27" cy="15" r="1.500" /><circle cx="31" cy="22" r="1.500" /><circle cx="40" cy="18" r="2.500" /><circle cx="44" cy="21" r="1.500" /><circle cx="45" cy="25" r="1.500" /><circle cx="48" cy="31" r="1.500" /></g></>],
  ["Map", <>{world.map((d) => <path key={d} d={d} fill={d === eurasia ? "#fcdfde" : "#f7d0ce"} />)}</>],
  ["Pie chart", <><circle cx="27" cy="20.500" r="14.500" fill={L} /><path d="M27 20.500L37.250 10.250A14.500 14.500 0 0137.250 30.750z" fill={B} /><path d="M27 20.500V6A14.500 14.500 0 0137.250 10.250z" fill="#ff9d9a" /><path d="M27 20.500V6A14.500 14.500 0 0012.500 20.500z" fill="#e15f58" /></>],
  ["Horizontal bars", <Boxes list={[[5, 6, 24, 4, B], [5, 14, 44, 4, B], [5, 22, 12, 4, B], [5, 30, 35, 4, B]]} />],
  ["Stacked bars", <Boxes list={[[6, 6, 8, 7, B], [6, 13, 8, 22, L], [17, 12, 8, 8, B], [17, 20, 8, 15, L], [29, 9, 8, 19, B], [29, 28, 8, 7, L], [41, 16, 8, 9, B], [41, 25, 8, 10, L]]} />],
  ["Side-by-side bars", <Boxes list={[[18, 0, 1, 40, "#ccc"], [36, 0, 1, 40, "#ccc"], [4, 26, 4, 14, B], [9, 17, 4, 23, L], [23, 10, 4, 30, B], [28, 21, 4, 19, L], [41, 30, 4, 10, B], [46, 16, 4, 24, L]]} />],
  ["Treemap", <Boxes list={[[5, 5, 21, 15, "#7eabd0"], [5, 21, 21, 14, B], [27, 5, 11, 10, "#7eabd0"], [39, 5, 10, 10, L], [27, 16, 7, 10, "#ff9d9a"], [35, 16, 7, 10, "#7eabd0"], [43, 16, 6, 10, L], [27, 27, 7, 8, "#e15f58"], [35, 27, 7, 8, L], [43, 27, 6, 4, B], [43, 32, 6, 3, L]]} />],
  ["Circle views", <Rings r={4.7} w={1.2} pts={[[10, 10, L], [10, 15, B], [10, 12, "#7eabd0"], [10, 28, "#7eabd0"], [28, 11, B], [28, 25, B], [28, 29, "#7eabd0"], [28, 41, L], [45.5, 11, "#7eabd0"], [45.5, 18, L], [45.5, 33, L]]} />],
  ["Side-by-side circles", <><path d="M27.500 0v40" stroke="#ccc" /><Rings r={3.7} w={1.2} pts={[[8, 9, B], [9, 13, L], [17.5, 12.5, B], [17.5, 25, L], [8, 32, L], [17.5, 34, B], [37.5, 9.5, L], [47, 12.5, B], [47, 17, "#7eabd0"], [37.5, 28.5, "#7eabd0"], [37.5, 32, L], [47, 30, L]]} /></>],
  ["Continuous lines", <g fill="none" strokeWidth="1.300"><path d="M4 12l8-7 10 14 10-7 8 7 11-6" stroke={fO} /><path d="M4 17l8 3 9-8 9 7 9 4 12-2" stroke="#fdebcf" /><path d="M3 22l9 10 16-9 10 9 13-2" stroke={fB} /></g>],
  ["Discrete lines", <><path d="M27.500 2v36" stroke="#e6e6e6" /><g fill="none" strokeWidth="1.300"><path d="M3 17l6 3 6-9h8M31 16l7-6 6 5 6-4" stroke={fO} /><path d="M3 26l7-3 6-6 8-1M31 25l6-4 6 3 7-3" stroke="#fdebcf" /><path d="M3 31l6-4 7 1 8-4M31 30l6-4 6 4 7-4" stroke={fB} /></g></>],
  ["Dual lines", <><path d="M3.500 4v34M51.500 4v34" stroke="#e6e6e6" strokeWidth="3" strokeDasharray="1 3" /><g fill="none" strokeWidth="1.300"><path d="M9 14l8-8 8 8 6-3 9 5 7-5" stroke={fO} /><path d="M9 19l6 2 4-3 9 10 6-3 6 4 7-9" stroke={fB} /></g></>],
  ["Area charts", <><path d="M2 21L13 7l21 13 18-5v23H2z" fill={fB} /><path d="M2 24l12-9 20 14 18-11v20H2z" fill={fO} /><path d="M2 32l12-6 20 6 18-5v11H2z" fill={fY} /></>],
  ["Discrete areas", <><path d="M2 20L8 7l9 12 9-5v24H2zM28 20l6-13 9 13 9-6v24H28z" fill={fB} /><path d="M2 24l6-8 9 13 9-10v19H2zM28 24l6-8 9 13 9-10v19H28z" fill={fO} /><path d="M2 31l6-5 9 6 9-4v10H2zM28 31l6-5 9 6 9-4v10H28z" fill={fY} /></>],
  ["Dual combination", <><path d="M3.500 4v34M51.500 4v34" stroke="#e3e3e3" strokeWidth="3" strokeDasharray="1 3" /><Boxes list={[[9, 21, 5, 17, fB], [17, 16, 5, 22, fB], [25, 25, 5, 13, fB], [33, 7, 5, 31, fB], [41, 20, 5, 18, fB]]} /><path d="M10 18l9-9 9 12 9-9 9 9" fill="none" stroke="#fbdcb8" strokeWidth="1.300" /></>],
  ["Scatter plot", <><Rings r={3.6} w={1.3} pts={[[21, 11, fO], [42, 13, fO], [13, 21, fO], [24, 25, fO], [7, 33, fO]]} /><path d="M30.500 7h9M35 2.500v9M26.500 18h9M31 13.500v9M41.500 24h9M46 19.500v9M12.500 31h9M17 26.500v9M30.500 30h9M35 25.500v9" stroke={fG} /></>],
  ["Histogram", <Boxes list={[[5, 34, 4, 3, fG], [10, 29, 4, 8, fG], [15, 20, 4, 17, fG], [20, 10, 4, 27, fG], [25, 6, 4, 31, fG], [30, 10, 4, 27, fG], [35, 20, 4, 17, fG], [40, 29, 4, 8, fG], [45, 34, 4, 3, fG]]} />],
  ["Box-and-whisker plot", <><Boxes list={[[6, 17, 7, 4, LG], [6, 21, 7, 8, G], [18, 12, 7, 9, LG], [18, 21, 7, 5, G], [30, 15, 7, 8, LG], [30, 23, 7, 8, G], [42, 10, 7, 12, LG], [42, 22, 7, 5, G]]} /><path d="M9.500 9.500v23M7 9.500h5M7 32.500h5M21.500 7.500v27M19 7.500h5M19 34.500h5M33.500 6.500v29M31 6.500h5M31 35.500h5M45.500 4.500v32M43 4.500h5M43 36.500h5" stroke="#222" /></>],
  ["Gantt", <Boxes list={[[3, 3, 9, 8, fG], [19, 3, 4, 8, fO], [24, 3, 4, 8, "#ffeedd"], [35, 3, 2, 8, fO], [41, 3, 8, 8, "#ffeedd"], [3, 15, 6, 8, "#e0f1e8"], [10, 15, 3, 8, fG], [17, 15, 4, 8, fG], [24, 15, 14, 8, "#e0f1e8"], [43, 15, 8, 8, fO], [3, 28, 2, 8, fG], [8, 28, 8, 8, "#ffeedd"], [18, 28, 2, 8, fO], [22, 28, 4, 8, "#e0f1e8"], [32, 28, 7, 8, fG], [45, 28, 4, 8, "#ffeedd"]]} />],
  ["Bullet graph", <Boxes list={[[4, 4, 38, 8, "#f7f7f7"], [4, 16, 45, 8, "#f7f7f7"], [4, 28, 40, 8, "#f7f7f7"], [4, 6, 25, 4, fG], [32, 4, 1, 8, "#aaa"], [4, 18, 40, 4, fG], [39, 16, 1, 8, "#aaa"], [4, 30, 21, 4, fG], [45, 28, 1, 8, "#aaa"]]} />],
  ["Packed bubbles", <><circle cx="14.500" cy="27" r="9.500" fill={LG} /><circle cx="15.500" cy="13" r="3.700" fill={G} /><circle cx="25" cy="10.500" r="5" fill={G} /><circle cx="35" cy="11" r="3" fill={LG} /><circle cx="44.500" cy="16" r="6.700" fill={LO} /><circle cx="30" cy="21" r="5.600" fill={LO} /><circle cx="39" cy="26.500" r="4" fill={O} /><circle cx="29" cy="32.500" r="4.300" fill={G} /></>],
];

function ShowMe() {
  return (
    <aside className="absolute top-12 right-1 z-20 flex w-[204px] flex-col text-[12px] text-[#333] drop-shadow-[2px_2px_2px_rgba(0,0,0,0.3)]">
      <button type="button" className="relative z-10 -mb-px ml-auto flex h-[37px] w-[111px] items-center border border-b-0 border-[#dadada] bg-[#fafafa] pb-1.5 pl-[11px] text-[14px] text-[#222]">
        <svg viewBox="0 0 14 16" className="mr-1.5 h-4 w-[14px]"><Boxes list={[[0, 0, 11, 3, "#8a7099"], [0, 4, 14, 3, "#7ea4cc"], [0, 8, 5, 3, "#f6a67f"], [0, 12, 8, 3, "#fc7180"]]} /></svg>
        <span className="font-['Roboto'] leading-4">Show Me</span>
      </button>
      <div className="h-[556px] border border-[#dadada] bg-[#fafafa] pt-3.5 pl-[13px]">
        <div className="grid grid-cols-[repeat(3,56px)] gap-1">
          {thumbs.map(([name, art]) => {
            const on = name === "Horizontal bars";
            return (
              <button key={name} type="button" aria-label={name} className={`h-[42px] bg-white ${on ? "border-2 border-[#dc6b35]" : "border border-[#e0e0e0]"}`}>
                <svg viewBox={on ? "1 1 52 38" : "0 0 54 40"} className="block h-full w-full">{art}</svg>
              </button>
            );
          })}
        </div>
        <div className="pt-[17px] pl-0.5">
          <p className="leading-[18px]">For <b className="text-black">horizontal bars</b> try</p>
          <p className="mt-1.5 flex h-5 items-center gap-0.5"><span className="pt-1">0 or more</span><span className="flex h-5 items-center rounded-full bg-[#4996b2] px-3 text-white">Dimensions</span></p>
          <p className="mt-2 flex h-5 items-center gap-0.5"><span className="pt-1">1 or more</span><span className="flex h-5 items-center rounded-full bg-[#00b180] px-3 text-white">Measures</span></p>
        </div>
      </div>
    </aside>
  );
}

/* ---------- sheet tabs and status bar ---------- */

const bookPath = "M5 4.500c3 0 5 .500 7 2.500 2-2 4-2.500 7-2.500v12c-3 0-5 .500-7 2.500-2-2-4-2.500-7-2.500zM12 7v12";

function SheetTabs() {
  const tab = "flex items-center justify-center whitespace-nowrap border-r border-[#cfcfcf]";
  return (
    <nav className="flex h-[31px] border-y border-[#cfcfcf] bg-[#e6e6e6] text-[12px] text-[#5a5a5a]">
      <button type="button" className="flex w-[131px] items-center gap-1 border-r border-[#cfcfcf] pl-2">
        <Ico s="h-3 w-3" w={1.8}><ellipse cx="12" cy="5" rx="6.500" ry="3" /><path d="M5.500 5v14c0 2 2.500 3 6.500 3s6.500-1 6.500-3V5" /></Ico>Data Source
      </button>
      {[1, 2, 3, 4, 5, 6, 7, 8].map((n) => (
        <button key={n} type="button" className={n === 5 ? `${tab} -my-px w-[57px] bg-[#fafafa] font-bold text-[#4a4a4a]` : n === 1 || n === 8 ? `${tab} w-14` : `${tab} w-[57px]`}>Sheet {n}</button>
      ))}
      <button type="button" className={`${tab} w-[102px] gap-1`}><Ico s="h-3 w-3" w={1.8}><path d="M2 3h20v18H2zM2 12h20M12 3v18" /></Ico>Dashboard 1</button>
      <button type="button" className={`${tab} w-[71px] gap-0.5`}><Ico s="h-4 w-4" w={1.6}><path d={bookPath} /></Ico>Story 1</button>
      <button type="button" aria-label="New worksheet" className={`${tab} w-8`}><Ico s="h-5 w-5"><path d="M12 17.500H3.500v-13h14V12M7 14.500V11M10.500 14.500v-7M14 13V9.500" /><path d="M17.500 14v8M13.500 18h8" stroke="#444" strokeWidth="2" /></Ico></button>
      <button type="button" aria-label="New dashboard" className={`${tab} w-8`}><Ico s="h-5 w-5"><path d="M13 17.500H3.500v-13h14V13M3.500 11h14M10.500 4.500v13" /><path d="M17.500 14v8M13.500 18h8" stroke="#444" strokeWidth="2" /></Ico></button>
      <button type="button" aria-label="New story" className={`${tab} w-8`}><Ico s="h-5 w-5"><path d="M11 19c-2-2-4-2.500-7-2.500v-12c3 0 5 .500 7 2.500 2-2 4-2.500 7-2.500V12M11 7v12" /><path d="M17.500 14v8M13.500 18h8" stroke="#444" strokeWidth="2" /></Ico></button>
    </nav>
  );
}

function StatusBar() {
  const arrows: [string, string][] = [["First sheet", "M2.500 2.500v7M10 3L6 6l4 3z"], ["Previous sheet", "M8 3L4 6l4 3z"], ["Next sheet", "M4 3l4 3-4 3z"], ["Last sheet", "M9.500 2.500v7M2 3l4 3-4 3z"]];
  return (
    <div className="flex h-5 items-center bg-[#ebebeb] pl-[3px] text-[11px] text-[#222]">
      <span>293 marks</span><span className="ml-[17px]">1 row by 1 column</span><span className="ml-3">SUM(Global Sales): 8,820.4</span>
      <div className="ml-auto flex h-full">
        {[0, 1, 2, 3, 4].map((i) => <span key={i} className="w-[42px] border-l border-[#d6d6d6]" />)}
        <span className="w-[22px] border-l border-[#d6d6d6]" />
      </div>
      <div className="flex items-center gap-1">
        {arrows.map(([n, d]) => (
          <button key={n} type="button" aria-label={n}><svg viewBox="0 0 12 12" className="h-3 w-3"><path d={d} fill="#b5b5b5" stroke="#b5b5b5" /></svg></button>
        ))}
      </div>
      <div className="mr-1.5 ml-[13px] flex items-center gap-[9px]">
        <button type="button" aria-label="Show sheet sorter"><svg viewBox="0 0 12 12" className="h-3 w-3"><path d="M0 2h12M0 6h12M0 10h12" stroke="#aaa" strokeWidth="3" strokeDasharray="3.300 1" /></svg></button>
        <button type="button" aria-label="Show filmstrip"><svg viewBox="0 0 12 12" className="h-3 w-3"><Boxes list={[[0, 1, 12, 6, "#aaa"], [0, 8, 3, 3, "#aaa"], [4.5, 8, 3, 3, "#aaa"], [9, 8, 3, 3, "#aaa"]]} /></svg></button>
        <button type="button" aria-label="Show tabs"><svg viewBox="0 0 12 12" className="h-3 w-3"><Boxes list={[[1, 1, 10, 8, "#4a4a4a"], [1, 10, 2, 1, "#4a4a4a"], [4, 10, 3, 1, "#4a4a4a"], [8, 10, 3, 1, "#4a4a4a"]]} /></svg></button>
      </div>
    </div>
  );
}

/* ---------- taskbar ---------- */

function Taskbar() {
  const app = "flex w-[49px] shrink-0 items-center justify-center";
  return (
    <footer className="flex h-10 bg-[#1c1c1c] text-white">
      <button type="button" aria-label="Start" className="flex w-12 shrink-0 items-center justify-center">
        <svg viewBox="0 0 16 16" className="h-4 w-4" fill="#fff"><path d="M0 2.300L6.600 1.400V7.600H0zM7.400 1.300L16 0V7.600H7.400zM0 8.400h6.600v6.200L0 13.700zM7.400 8.400H16V16l-8.600-1.200z" /></svg>
      </button>
      <div className="flex w-[288px] shrink-0 items-center gap-2.5 border-2 border-[#bfbfbf] bg-white pl-[9px]">
        <Ico s="h-[19px] w-[19px]" c="#111" w={1.5}><circle cx="14.500" cy="9" r="7" /><path d="M9.500 14L2.500 21.500" /></Ico>
        <input aria-label="Search" placeholder="Type here to search" className="w-full min-w-0 text-[14px] outline-none placeholder:text-[#333]" />
      </div>
      <button type="button" aria-label="Task view" className="flex w-12 shrink-0 items-center justify-center">
        <Ico s="h-5 w-5" c="#fff" w={1.3}><path d="M3 2v3.500h12V2M3 22v-3.500h12V22M3 8.500h12v7H3zM19.500 2v20" /><path d="M18 8.500h3v3h-3z" fill="#fff" /></Ico>
      </button>
      <button type="button" aria-label="Edge" className="flex w-[54px] shrink-0 items-center justify-center">
        <svg viewBox="0 0 24 24" className="h-6 w-6">
          <defs><linearGradient id="edgeTop" x1="0" x2="1"><stop offset="0" stopColor="#2aa7e6" /><stop offset=".5" stopColor="#2fc6d0" /><stop offset="1" stopColor="#6bdc58" /></linearGradient></defs>
          <circle cx="12" cy="12" r="11.500" fill="#1271c9" />
          <path d="M.6 11C1.500 4.500 6.500.5 12 .5c6.500 0 11.500 4.500 11.500 10 0 3.500-2.500 5.700-5.700 5.700-2.600 0-3.900-.9-3.900-1.700 0-.7 1-1.100 1-3 0-2.500-2.500-4.700-6-4.700C5.300 6.800 2 8.500.6 11z" fill="url(#edgeTop)" />
          <path d="M9 23c-3-1.500-4.500-4.500-4.200-7.500.3-3 2-5.500 4.700-6.500-1.500 2-1.500 3.500-1.200 5 .7 4 5 6.500 9.500 5.500 1.500-.3 2.700-.9 3.700-1.400-2 4-7 6.300-12.500 4.900z" fill="#0d4f9e" />
          <path d="M14.900 12.500c-.3.900-1 1.300-1 2 0 .8 1.300 1.700 3.900 1.700 2.100 0 4-.9 4.900-2.500.4 1.500.300 2.800-.600 4-1.200.7-3.500 1-5.500.8-4-.5-6.800-2.500-6.800-6 2 2 4 1.500 5.100 0z" fill="#1c1c1c" />
        </svg>
      </button>
      <button type="button" aria-label="File Explorer" className="flex w-[45px] shrink-0 items-center justify-center">
        <svg viewBox="0 0 24 24" className="h-6 w-6"><path d="M1.500 3h7l2 2.500h12V19h-21z" fill="#f5b92e" /><path d="M1.500 7.500h21V20h-21z" fill="#fddc73" /><path d="M5.500 21.500v-6.500c0-1 .7-1.700 1.700-1.700h9.600c1 0 1.700.7 1.700 1.700v6.500h-4v-4.500h-5v4.500z" fill="#3d94dc" /></svg>
      </button>
      <button type="button" aria-label="Microsoft Store" className="flex w-[51px] shrink-0 items-center justify-center">
        <svg viewBox="0 0 24 24" className="h-6 w-6"><path d="M7.500 6V1.500h9V6" fill="none" stroke="#2fa8e6" strokeWidth="2" /><path d="M.8 5.500h22.400v14.500a3 3 0 01-3 3H3.800a3 3 0 01-3-3z" fill="#f5f5f5" /><Boxes list={[[7, 9.5, 4.5, 4.5, "#f25022"], [12.5, 9.5, 4.5, 4.5, "#7fba00"], [7, 15, 4.5, 4.5, "#00a4ef"], [12.5, 15, 4.5, 4.5, "#ffb900"]]} /></svg>
      </button>
      <button type="button" aria-label="Mail" className={app}>
        <svg viewBox="0 0 24 24" className="h-6 w-6"><path d="M0 9L12 1l12 8v13H0z" fill="#0d5fb3" /><path d="M1 8.500h22L12 18z" fill="#f5f5f5" /><path d="M0 9l12 8L0 22.500z" fill="#2a9be8" /><path d="M24 9v13.500H0z" fill="#3db3f2" /></svg>
      </button>
      <button type="button" aria-label="Chrome" className={app}>
        <svg viewBox="0 0 24 24" className="h-6 w-6"><circle cx="12" cy="12" r="11.500" fill="#fbc116" /><path d="M2.040 6.250A11.500 11.500 0 0012 23.500l5-8.500H8z" fill="#2ba24c" /><path d="M12 12L7 15 2.040 6.250A11.500 11.500 0 0121.960 6.250V6.400H12z" fill="#e33b2e" /><circle cx="12" cy="12" r="5.600" fill="#fff" /><circle cx="12" cy="12" r="4.400" fill="#4285f4" /></svg>
      </button>
      <button type="button" aria-label="Tableau" className="flex w-12 shrink-0 items-center justify-center border-b-2 border-[#76b9ed] bg-[#484848]">
        <span className="flex h-[23px] w-[23px] items-center justify-center bg-[#f2f2f2]"><Ico s="h-[21px] w-[21px]"><TableauMark c={["#2f83ae", "#5b9dc0", "#8bb7cf"]} /></Ico></span>
      </button>
      <div className="ml-auto flex items-center">
        <svg viewBox="0 0 26 24" className="h-6 w-[26px]"><circle cx="11" cy="9" r="8" fill="#f08a32" /><path d="M6 22.500a5 5 0 01-.5-10 7 7 0 0112.500-1 5.600 5.600 0 012 11z" fill="#cddcf0" /><path d="M3 20.500h20a4 4 0 01-3 2H6a5 5 0 01-3-2z" fill="#8fb0dc" /></svg>
        <span className="ml-[7px] text-[13px]">29°C</span><span className="ml-[9px] text-[13px]">Haze</span>
        <Ico s="ml-[22px] h-4 w-4" c="#fff" w={1.8}><path d="M4 16l8-8 8 8" /></Ico>
        <Ico s="ml-2 h-4 w-4" c="#fff" w={1.6}><path d="M2 7.500h17v9.500H2zM21 10v4.500" /><path d="M4 9.500h7V15H4z" fill="#fff" /></Ico>
        <Ico s="ml-2 h-[18px] w-[18px]" c="#fff" w={1.4}><circle cx="11" cy="11" r="9" /><ellipse cx="11" cy="11" rx="4" ry="9" /><path d="M2.500 8h17M2.500 14h10" /><path d="M13 14h9v6h-9zM16 22.500h4" fill="#1c1c1c" /></Ico>
        <Ico s="ml-1.5 h-[18px] w-[18px]" c="#fff" w={1.4}><path d="M2 9h4l5-4.500v15L6 15H2zM14 9c1.500 2 1.500 4 0 6M17 6.500c3 3.500 3 7.500 0 11M20 4c4.500 5 4.500 11 0 16" /></Ico>
        <span className="ml-2 font-['Roboto'] text-[12px]">ENG</span>
        <div className="ml-[13px] text-center font-['Roboto'] text-[12px] leading-[18px]"><div>09:25</div><div>13-04-2023</div></div>
        <Ico s="mr-[23px] ml-[15px] h-[19px] w-[19px]" c="#fff" w={1.4}><path d="M3 4h18v13h-5v4l-4-4H3z" /></Ico>
      </div>
    </footer>
  );
}

export default function App() {
  return (
    <div className="relative flex min-h-screen flex-col bg-[#f5f5f5] font-['Open_Sans',sans-serif]">
      <TitleBar />
      <Toolbar />
      <div className="flex flex-1">
        <DataPane />
        <Cards />
        <View />
      </div>
      <ShowMe />
      <SheetTabs />
      <StatusBar />
      <Taskbar />
    </div>
  );
}
